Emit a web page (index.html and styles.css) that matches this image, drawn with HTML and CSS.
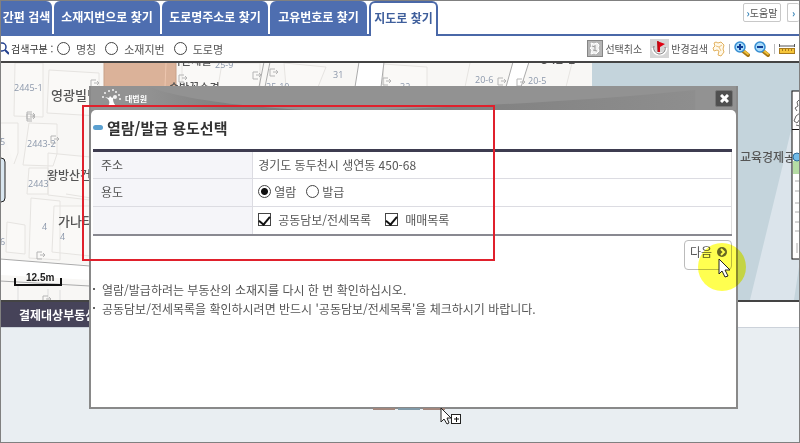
FILE: index.html
```html
<!DOCTYPE html>
<html lang="ko">
<head>
    <meta charset="UTF-8">
    <meta name="viewport" content="width=device-width, initial-scale=1.0">
    <link rel="stylesheet" href="styles.css">
    <title>지도로 찾기</title>
</head>
<body>
    <div class="page">
        <header class="top">
            <nav class="tabs">
                <a class="tab" href="#">간편 검색</a>
                <a class="tab" href="#">소재지번으로 찾기</a>
                <a class="tab" href="#">도로명주소로 찾기</a>
                <a class="tab" href="#">고유번호로 찾기</a>
                <a class="tab active" href="#">지도로 찾기</a>
            </nav>
            <div class="help">
                <button class="help-button"><span class="arrow">›</span>도움말</button>
                <button class="help-button cut" aria-label="›"><span class="arrow">›</span></button>
            </div>
        </header>

        <div class="toolbar">
            <div class="search-type">
                <svg class="lens" width="8" height="14" viewBox="0 0 8 14">
                    <circle cx="1" cy="5" r="4" fill="none" stroke="#23408f" stroke-width="1.5"/>
                    <path d="M4 8l4 4" stroke="#23408f" stroke-width="2"/>
                </svg>
                <span class="type-title">검색구분 :</span>
                <label><input type="radio" name="type"> 명칭</label>
                <label><input type="radio" name="type"> 소재지번</label>
                <label><input type="radio" name="type"> 도로명</label>
            </div>
            <div class="tools">
                <button class="tool">
                    <svg width="16" height="17" viewBox="0 0 16 17">
                        <rect x=".5" y=".5" width="15" height="16" fill="#b5b5b5" stroke="#858585"/>
                        <path d="M4 3l3 1 3-1 2 2-1 3 1 3-3 3-2-1-3 1 1-4-2-2 2-1z" fill="#eee" stroke="#fff"/>
                        <path d="M5 6l3 1M8 5v5M6 10l4 1" stroke="#999" fill="none"/>
                    </svg>
                    <span>선택취소</span>
                </button>
                <button class="tool">
                    <svg width="19" height="19" viewBox="0 0 19 19">
                        <rect width="19" height="19" fill="#d5d5d5"/>
                        <path d="M3 9c0 8 13 8 13 0" fill="none" stroke="#fff" stroke-width="3"/>
                        <path d="M4 7c-1 4 1 7 5 8 4 0 7-3 6-7" fill="none" stroke="#777"/>
                        <path d="M7 2l8 3-5 3v5H8z" fill="#e00012"/>
                        <path d="M8 2v11" stroke="#a01010"/>
                    </svg>
                    <span>반경검색</span>
                </button>
                <button class="tool" aria-label="지역">
                    <svg width="13" height="16" viewBox="0 0 13 16">
                        <path d="M2 2l2-1 2 1 3-1 3 3-1 4 1 3-3 4-3-1 1-4-2-1-3 1-1-3 2-2z" fill="#fff9ea" stroke="#e2b15e"/>
                        <path d="M4 5l3 1 3-2M7 6l2 4" fill="none" stroke="#ebc17c"/>
                    </svg>
                </button>
                <span class="divider"></span>
                <button class="tool" aria-label="확대">
                    <svg width="16" height="16" viewBox="0 0 16 16">
                        <path d="M9 10l5 4" stroke="#a97812" stroke-width="4" stroke-linecap="round"/>
                        <path d="M10 10l4 3" stroke="#f2c23b" stroke-width="2" stroke-linecap="round"/>
                        <circle cx="6" cy="6" r="5" fill="#a9dcfa" stroke="#368dd2" stroke-width="1.5"/>
                        <path d="M3 6h6M6 3v6" stroke="#103d95" stroke-width="2"/>
                    </svg>
                </button>
                <button class="tool" aria-label="축소">
                    <svg width="16" height="16" viewBox="0 0 16 16">
                        <path d="M9 10l5 4" stroke="#a97812" stroke-width="4" stroke-linecap="round"/>
                        <path d="M10 10l4 3" stroke="#f2c23b" stroke-width="2" stroke-linecap="round"/>
                        <circle cx="6" cy="6" r="5" fill="#a9dcfa" stroke="#368dd2" stroke-width="1.5"/>
                        <path d="M3 6h6" stroke="#103d95" stroke-width="2"/>
                    </svg>
                </button>
                <span class="divider"></span>
                <button class="tool" aria-label="거리재기">
                    <svg width="16" height="10" viewBox="0 0 16 10">
                        <path d="M0 2h16M.5 0v3M15.500 0v3" stroke="#555"/>
                        <rect x=".5" y="4.500" width="15" height="5" fill="#f5c53a" stroke="#a87a1b"/>
                        <path d="M3.500 5v2M6.500 5v2M9.500 5v2M12.500 5v2" stroke="#a87a1b"/>
                    </svg>
                </button>
            </div>
        </div>

        <svg class="map" viewBox="1 63 798 237" preserveAspectRatio="xMidYMid slice">
            <rect x="0" y="62" width="592" height="240" fill="#f8f7f5"/>
            <rect x="592" y="62" width="210" height="240" fill="#c4d4dc"/>
            <path d="M800 92L784 160 750 300h44l6-40z" fill="#dbe4eb"/>

            <!-- lots and roads -->
            <g fill="#faf9f7" stroke="#e6e4e1">
                <path d="M15 63h28v54l-29-1zM49 70l50 3v43l-52-3zM29 123l28 1v30l-4 12-30-1zM0 123h18v30l-4 11M48 153l42 4v43l-42-5zM29 168h19v26H27zM31 198l29 3v59l-31-2zM7 222l18 3v29L6 252zM54 206h36v50l-38-4zM66 194l25 4"/>
                <path d="M182 63h78v24h-78zM222 63l-4 24M284 63l42 4-8 20h-32zM383 64l44 3v20h-43zM470 63l-5 24M572 63l-6 24"/>
            </g>
            <path d="M104 62h72v25h-72z" fill="#dbb299" stroke="#c8a087"/>
            <path d="M166 63l-1 24" stroke="#edc6af"/>
            <path d="M359 62l-4 25h26l3-25zM513 62l-7 25h15l8-25zM0 259l92 6v15l-92-5z" fill="#fff"/>
            <path d="M0 259l90 7M0 281l90 5M359 62l-4 25M384 62l-3 25M513 62l-7 25M529 62l-8 25M270 62l-5 25M264 62l-5 25" fill="none" stroke="#aaa"/>
            <path d="M18 300v-14M48 300v-11M60 290v10" stroke="#ddd"/>

            <!-- entrance marks -->
            <g fill="none" stroke="#b5b5b5">
                <path id="gate" d="M32 114h-5v7h5M30 117h5M33 115l2 2-2 2"/>
                <use href="#gate" y="-2"/>
                <use href="#gate" x="24" y="22"/>
                <use href="#gate" x="64" y="-34"/>
                <use href="#gate" x="10" y="138"/>
                <use href="#gate" x="152" y="-39"/>
                <use href="#gate" x="226" y="-42"/>
                <use href="#gate" x="243" y="-45"/>
                <use href="#gate" x="356" y="-36"/>
                <use href="#gate" x="471" y="-36"/>
                <use href="#gate" x="490" y="-35"/>
                <use href="#gate" x="16" y="182"/>
            </g>

            <g class="lot-number">
                <text x="14" y="91">2445-1</text>
                <text x="27" y="147">2443-2</text>
                <text x="28" y="187">2443</text>
                <text x="42" y="230">4</text>
                <text x="60" y="240">4</text>
                <text x="0" y="245">6</text>
                <text x="0" y="145">5</text>
                <text x="215" y="68">25-9</text>
                <text x="333" y="78">31</text>
                <text x="266" y="90">25-10</text>
                <text x="400" y="90">32</text>
                <text x="475" y="83">20-6</text>
                <text x="528" y="84">20-5</text>
            </g>
            <g class="place">
                <text class="strong" x="51" y="100">영광빌딩</text>
                <text x="47" y="180">왕방산건강</text>
                <text class="strong" x="58" y="226">가나타운</text>
                <text class="small" x="171" y="65">박산세월</text>
                <text class="small" x="169" y="92">솔방꽃수경</text>
                <text class="strong" x="541" y="64">542-1</text>
                <text x="740" y="162">교육경제공사</text>
            </g>

            <!-- scale -->
            <path d="M15 278v7h46v-7" fill="none" stroke="#111" stroke-width="2"/>
            <text class="scale" x="26" y="281">12.5m</text>

            <rect x="-12" y="158" width="17" height="44" rx="4" fill="#d9e6ef" stroke="#222"/>

            <!-- overview map -->
            <rect x="792" y="91" width="12" height="168" fill="#fff" stroke="#111"/>
            <path d="M792 129.500h8" stroke="#111"/>
            <path d="M800 99l-3 3 1 4-3 2 2 3M800 113l-4 3-2 5 3 2 3-4M796 125l4 1" fill="none" stroke="#666"/>
            <path d="M793 161h7v13h-7z" fill="#b5dca4"/>
            <path d="M795 181h5M795 191h5M795 203h5M795 212h5M795 222h5M795 231h5M797 243v10" stroke="#aaa"/>
            <circle cx="797" cy="157" r="4" fill="#73bde9" stroke="#2b6c9c"/>
        </svg>

        <div class="result-bar">
            <strong>결제대상부동산</strong>
        </div>
        <main class="result-list"></main>

        <section class="dialog" role="dialog" aria-labelledby="dialogTitle">
            <header class="dialog-header">
                <div class="court">
                    <svg width="21" height="18" viewBox="0 0 21 18">
                        <path d="M6 18c3-3 3-5 1-8l-3-2 4 1 1-2 2 2 3-2-2 3c0 3 1 5 4 8z" fill="#fff"/>
                        <g fill="#f3f3f3">
                            <circle cx="2" cy="8" r="1"/><circle cx="4" cy="4" r="1"/>
                            <circle cx="8" cy="2" r="1"/><circle cx="12" cy="1" r="1"/>
                            <circle cx="15" cy="3" r="1"/><circle cx="18" cy="6" r="1"/>
                            <circle cx="14" cy="8" r="2"/><circle cx="19" cy="10" r="1"/>
                        </g>
                    </svg>
                    <span>대법원</span>
                </div>
                <svg class="wave" viewBox="0 0 580 24" preserveAspectRatio="none">
                    <defs>
                        <linearGradient id="waveLeft">
                            <stop offset="0" stop-color="#929292"/>
                            <stop offset=".5" stop-color="#808080"/>
                            <stop offset="1" stop-color="#7a7a7a"/>
                        </linearGradient>
                        <linearGradient id="waveRight">
                            <stop offset="0" stop-color="#7c7c7c"/>
                            <stop offset="1" stop-color="#8e8e8e"/>
                        </linearGradient>
                    </defs>
                    <path d="M0 0c30 12 90 20 160 24H0z" fill="url(#waveLeft)"/>
                    <path d="M560 4C450 15 350 19 240 24h320z" fill="url(#waveRight)"/>
                </svg>
                <button class="close" aria-label="닫기">
                    <svg width="9" height="9" viewBox="0 0 9 9">
                        <path d="M1 1l7 7M8 1L1 8" stroke="#fff" stroke-width="3"/>
                    </svg>
                </button>
            </header>
            <div class="dialog-body">
                <h1 id="dialogTitle">열람/발급 용도선택</h1>
                <table class="form">
                    <tr>
                        <th scope="row">주소</th>
                        <td>경기도 동두천시 생연동 450-68</td>
                    </tr>
                    <tr>
                        <th scope="row">용도</th>
                        <td>
                            <div class="options radios">
                                <label><input type="radio" name="purpose" checked>열람</label>
                                <label><input type="radio" name="purpose">발급</label>
                            </div>
                        </td>
                    </tr>
                    <tr>
                        <th></th>
                        <td>
                            <div class="options checks">
                                <label><input type="checkbox" checked>공동담보/전세목록</label>
                                <label><input type="checkbox" checked>매매목록</label>
                            </div>
                        </td>
                    </tr>
                </table>
                <div class="actions">
                    <button class="next">다음
                        <svg width="10" height="10" viewBox="0 0 10 10">
                            <circle cx="5" cy="5" r="5" fill="#66666b"/>
                            <path d="M4 2l3 3-3 3" fill="none" stroke="#fff" stroke-width="2"/>
                        </svg>
                    </button>
                </div>
                <ul class="notes">
                    <li>열람/발급하려는 부동산의 소재지를 다시 한 번 확인하십시오.</li>
                    <li>공동담보/전세목록을 확인하시려면 반드시 '공동담보/전세목록'을 체크하시기 바랍니다.</li>
                </ul>
            </div>
        </section>

        <div class="peek"><i></i><i class="blue"></i><i></i></div>
        <div class="marker"></div>
        <div class="spot"></div>
        <svg class="pointer next-pointer" width="13" height="20" viewBox="0 0 13 20">
            <path d="M1 1v15l3-3 3 6 3-1-3-6h5z" fill="#fff" stroke="#222"/>
        </svg>
        <svg class="pointer drag-pointer" width="22" height="20" viewBox="0 0 22 20">
            <path d="M1 1v14l3-3 3 5 2-1-2-5h4z" fill="#fff" stroke="#222"/>
            <rect x="11.500" y="7.500" width="9" height="9" fill="#fff" stroke="#222"/>
            <path d="M14 12h5M16.500 10v5" stroke="#111"/>
        </svg>
    </div>
</body>
</html>
```
FILE: styles.css
```css
* {
    box-sizing: border-box;
}

body {
    margin: 0;
    font-family: 'Noto Sans CJK KR', sans-serif;
    font-size: 12px;
    color: #555;
}

button {
    font-family: inherit;
    color: inherit;
    padding: 0;
    border: none;
    background: none;
    cursor: pointer;
}

input {
    flex: none;
    appearance: none;
    width: 13px;
    height: 13px;
    margin: 0;
    border: 1px solid #444;
    background: #fff;
}

input[type="radio"] {
    border-radius: 50%;
}

input[type="radio"]:checked {
    background: radial-gradient(circle, #111 3px, #fff 4px);
}

input[type="checkbox"]:checked::before {
    content: "";
    display: block;
    width: 5px;
    height: 9px;
    margin: 0 auto;
    border: solid #111;
    border-width: 0 2px 2px 0;
    transform: rotate(40deg);
}

label {
    display: flex;
    align-items: center;
}

.page {
    position: relative;
    display: flex;
    flex-direction: column;
    min-height: 100vh;
    overflow: hidden;
    border: 1px solid #808080;
    background: #fff;
}

/* tabs */
.top {
    display: flex;
    justify-content: space-between;
    height: 35px;
    border-bottom: 2px solid #4a68a8;
}

.tabs {
    display: grid;
    grid-template-columns: 51px 106px 106px 97px 69px;
    gap: 2px;
    height: 35px;
}

.tab {
    display: flex;
    align-items: center;
    justify-content: center;
    padding-bottom: 4px;
    font-weight: bold;
    white-space: nowrap;
    text-decoration: none;
    color: #fff;
    background: #4e6eb0;
    border-radius: 0 6px 0 0;
}

.tab + .tab {
    border-radius: 6px 6px 0 0;
}

.tab.active {
    color: #3f5f9c;
    background: #fff;
    border: 2px solid #4a68a8;
    border-bottom: none;
}

.help {
    display: flex;
    gap: 6px;
    padding-top: 2px;
}

.help-button {
    display: flex;
    align-items: center;
    justify-content: center;
    width: 38px;
    height: 19px;
    font-size: 10px;
    border: 1px solid #c8c8c8;
    border-radius: 2px;
}

.help-button.cut {
    width: 12px;
    border-right: none;
}

.arrow {
    font-weight: bold;
    color: #2f7fb5;
}

/* toolbar */
.toolbar {
    display: flex;
    justify-content: space-between;
    align-items: center;
    height: 27px;
    border-bottom: 2px solid #444;
}

.search-type {
    display: flex;
    align-items: center;
}

.search-type label {
    gap: 6px;
    margin-right: 9px;
    font-size: 11px;
}

.type-title {
    margin-left: 2px;
    font-size: 10px;
    color: #333;
    width: 46px;
}

.tools {
    display: flex;
    align-items: center;
    gap: 4px;
    padding-right: 4px;
}

.tool {
    display: flex;
    align-items: center;
    gap: 2px;
    font-size: 10px;
}

.tool:nth-child(2) {
    margin-left: 4px;
}

.divider {
    width: 1px;
    height: 10px;
    background: #bbb;
}

/* map */
.map {
    display: block;
    width: 100%;
    height: 237px;
}

.lot-number {
    font-family: 'Open Sans', sans-serif;
    font-size: 9px;
    fill: #8c98ab;
}

.place {
    font-size: 12px;
    font-weight: 500;
    fill: #555;
}

.strong {
    font-size: 13px;
}

.small {
    font-size: 11px;
}

.scale {
    font-family: 'Liberation Sans', sans-serif;
    font-size: 10px;
    font-weight: bold;
    fill: #222;
}

.result-bar {
    display: flex;
    height: 28px;
    border-top: 2px solid #444;
    border-bottom: 1px solid #ccd2da;
}

.result-bar strong {
    display: flex;
    align-items: center;
    width: 50%;
    padding-left: 18px;
    font-size: 12px;
    color: #fff;
    background: #464359;
}

.result-list {
    flex: 1;
    background: #e9eef2;
}

/* dialog */
.dialog {
    position: absolute;
    top: 85px;
    left: 88px;
    right: 61px;
    background: #898989;
    border: 2px solid #898989;
    border-top: none;
}

.dialog-header {
    display: flex;
    align-items: center;
    height: 24px;
    padding-right: 3px;
    background: #929292;
}

.court {
    display: flex;
    align-items: center;
    gap: 3px;
    padding-left: 10px;
    font-size: 8px;
    font-weight: bold;
    color: #fff;
}

.wave {
    flex: 1;
    height: 24px;
    min-width: 0;
}

.close {
    display: flex;
    align-items: center;
    justify-content: center;
    width: 18px;
    height: 17px;
    border: 1px solid #777;
    border-radius: 2px;
    background: #505050;
}

.dialog-body {
    min-height: 297px;
    padding: 4px 4px 0 2px;
    border-radius: 5px 5px 0 0;
    background: #fff;
}

h1 {
    display: flex;
    align-items: center;
    gap: 4px;
    height: 35px;
    margin: 0;
    padding-bottom: 8px;
    font-size: 15px;
    color: #333;
}

h1::before {
    content: "";
    width: 10px;
    height: 5px;
    border-radius: 3px;
    background: #5ba0d0;
}

.form {
    width: 100%;
    border-collapse: collapse;
    border-top: 3px solid #3e3c50;
    border-bottom: 2px solid #898991;
    border-right: 1px solid #ddd;
}

.form th,
.form td {
    height: 28px;
    padding: 0 5px 2px;
    text-align: left;
    border-bottom: 1px solid #dcdce2;
}

.form th {
    width: 25%;
    padding-left: 8px;
    font-weight: normal;
    background: #f5f5f9;
    border-right: 1px solid #dcdce2;
}

.options {
    display: flex;
}

.radios {
    gap: 10px;
}

.radios label {
    gap: 3px;
}

.checks {
    gap: 14px;
}

.checks label {
    gap: 7px;
}

.actions {
    display: flex;
    justify-content: flex-end;
    padding-top: 4px;
}

.next {
    display: flex;
    align-items: flex-start;
    gap: 5px;
    width: 48px;
    height: 30px;
    padding: 2px 5px;
    font-size: 12px;
    border: 1px solid #bbb;
    border-radius: 4px;
    white-space: nowrap;
}

.next svg {
    flex: none;
    margin-top: 4px;
}

.notes {
    margin: 10px 0 0;
    padding: 0;
    list-style: none;
    line-height: 19px;
}

.notes li {
    display: flex;
    align-items: center;
    gap: 7px;
}

.notes li::before {
    content: "";
    width: 2px;
    height: 2px;
    background: #666;
}

/* things lying over the page */
.peek {
    position: absolute;
    top: 407px;
    left: 372px;
    display: flex;
    gap: 3px;
}

.peek i {
    width: 22px;
    height: 2px;
    background: #a3877d;
}

.peek .blue {
    background: #819aa8;
}

.marker {
    position: absolute;
    top: 104px;
    left: 81px;
    width: 413px;
    height: 156px;
    border: 2px solid #e0202c;
}

.spot {
    position: absolute;
    top: 242px;
    right: 53px;
    width: 48px;
    height: 48px;
    border-radius: 50%;
    background: #ffff50;
    mix-blend-mode: multiply;
}

.pointer {
    position: absolute;
}

.next-pointer {
    top: 257px;
    right: 68px;
}

.drag-pointer {
    top: 406px;
    left: 439px;
}
```
